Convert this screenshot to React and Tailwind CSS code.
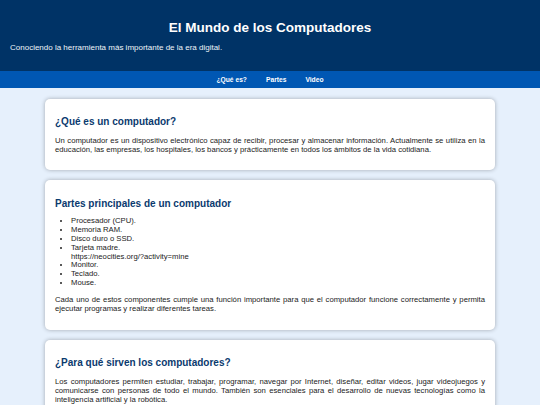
import React from "react";

function Card({ title, children }) {
  return (
    <section className="w-[450px] mx-auto bg-white rounded-[5px] shadow-[0_0_4px_rgba(0,0,0,0.3)] px-[10px] pt-[17.5px] pb-[16.5px]">
      <h2 className="text-[10px] font-bold leading-[11.5px] text-[#0b3a6e]">{title}</h2>
      {children}
    </section>
  );
}

export default function App() {
  const items = [
    "Procesador (CPU).",
    "Memoria RAM.",
    "Disco duro o SSD.",
  ];
  return (
    <div className="min-h-screen bg-[#e6f0fc] font-[family-name:Liberation_Sans,Arial,sans-serif] text-[#222]">
      <header className="bg-[#003366] text-white pt-[19.5px] pb-[18.5px] px-[10px]">
        <h1 className="text-center text-[13.5px] font-bold leading-[15.5px]">El Mundo de los Computadores</h1>
        <p className="mt-[8px] text-[8px] leading-[9.2px] text-[#eef3f8]">
          Conociendo la herramienta más importante de la era digital.
        </p>
      </header>
      <nav className="bg-[#0057b3] h-[17.7px] flex items-center justify-center gap-[19px] text-white text-[6.7px] font-bold">
        <a>¿Qué es?</a>
        <a>Partes</a>
        <a>Video</a>
      </nav>
      <main className="pt-[10.3px] pb-[10px] flex flex-col gap-[10px] text-[7.7px] leading-[9px]">
        <Card title="¿Qué es un computador?">
          <p className="mt-[8px] text-justify">
            Un computador es un dispositivo electrónico capaz de recibir, procesar y almacenar información. Actualmente se utiliza en la educación, las empresas, los hospitales, los bancos y prácticamente en todos los ámbitos de la vida cotidiana.
          </p>
        </Card>
        <Card title="Partes principales de un computador">
          <ul className="mt-[8px] list-disc pl-[16px] leading-[8.86px]">
            {items.map((t) => (
              <li key={t}>{t}</li>
            ))}
            <li>
              Tarjeta madre.
              <br />
              https://neocities.org/?activity=mine
            </li>
            <li>Monitor.</li>
            <li>Teclado.</li>
            <li>Mouse.</li>
          </ul>
          <p className="mt-[7px] text-justify">
            Cada uno de estos componentes cumple una función importante para que el computador funcione correctamente y permita ejecutar programas y realizar diferentes tareas.
          </p>
        </Card>
        <Card title="¿Para qué sirven los computadores?">
          <p className="mt-[8px] text-justify">
            Los computadores permiten estudiar, trabajar, programar, navegar por Internet, diseñar, editar videos, jugar videojuegos y comunicarse con personas de todo el mundo. También son esenciales para el desarrollo de nuevas tecnologías como la inteligencia artificial y la robótica.
          </p>
        </Card>
      </main>
    </div>
  );
}
